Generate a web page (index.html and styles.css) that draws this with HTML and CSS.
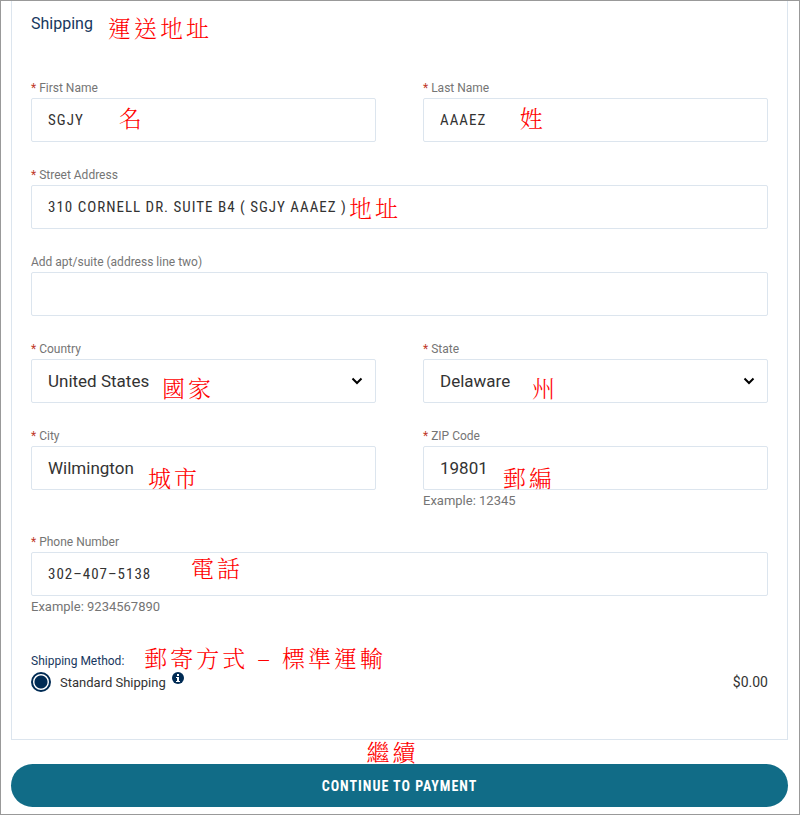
FILE: index.html
```html
<!DOCTYPE html>
<html lang="en">
<head>
  <meta charset="UTF-8" />
  <meta name="viewport" content="width=device-width, initial-scale=1" />
  <title>Checkout - Shipping</title>
  <link rel="stylesheet" href="styles.css">
</head>
<body>
  <form class="checkout">
    <section class="card">
      <div class="card-header">
        <h2>Shipping</h2>
        <span class="note" lang="zh-Hant">運送地址</span>
      </div>

      <div class="fields">
        <div class="field">
          <label for="firstName"><span class="required">*</span> First Name</label>
          <div class="control">
            <input class="caps" type="text" id="firstName" value="SGJY">
            <span class="note note-first" lang="zh-Hant">名</span>
          </div>
        </div>
        <div class="field">
          <label for="lastName"><span class="required">*</span> Last Name</label>
          <div class="control">
            <input class="caps" type="text" id="lastName" value="AAAEZ">
            <span class="note note-last" lang="zh-Hant">姓</span>
          </div>
        </div>

        <div class="field wide">
          <label for="street"><span class="required">*</span> Street Address</label>
          <div class="control">
            <input class="caps" type="text" id="street" value="310 CORNELL DR. SUITE B4 ( SGJY AAAEZ )">
            <span class="note note-street" lang="zh-Hant">地址</span>
          </div>
        </div>

        <div class="field wide">
          <label for="apt">Add apt/suite (address line two)</label>
          <div class="control">
            <input type="text" id="apt">
          </div>
        </div>

        <div class="field">
          <label for="country"><span class="required">*</span> Country</label>
          <div class="control">
            <select id="country">
              <option>United States</option>
            </select>
            <svg class="chevron" viewBox="0 0 12 8" aria-hidden="true"><path d="M1.5 1.5L6 6l4.500-4.500" /></svg>
            <span class="note note-country" lang="zh-Hant">國家</span>
          </div>
        </div>
        <div class="field">
          <label for="state"><span class="required">*</span> State</label>
          <div class="control">
            <select id="state">
              <option>Delaware</option>
            </select>
            <svg class="chevron" viewBox="0 0 12 8" aria-hidden="true"><path d="M1.5 1.5L6 6l4.500-4.500" /></svg>
            <span class="note note-state" lang="zh-Hant">州</span>
          </div>
        </div>

        <div class="field">
          <label for="city"><span class="required">*</span> City</label>
          <div class="control">
            <input type="text" id="city" value="Wilmington">
            <span class="note note-city" lang="zh-Hant">城市</span>
          </div>
        </div>
        <div class="field">
          <label for="zip"><span class="required">*</span> ZIP Code</label>
          <div class="control">
            <input type="text" id="zip" value="19801">
            <span class="note note-zip" lang="zh-Hant">郵編</span>
          </div>
          <div class="hint">Example: 12345</div>
        </div>

        <div class="field wide">
          <label for="phone"><span class="required">*</span> Phone Number</label>
          <div class="control">
            <input class="caps" type="tel" id="phone" value="302–407–5138">
            <span class="note note-phone" lang="zh-Hant">電話</span>
          </div>
          <div class="hint">Example: 9234567890</div>
        </div>
      </div>

      <div class="method">
        <div class="method-title">
          <span>Shipping Method:</span>
          <span class="note" lang="zh-Hant">郵寄方式 – 標準運輸</span>
        </div>
        <div class="method-option">
          <input type="radio" id="standard" name="method" checked>
          <label for="standard">Standard Shipping</label>
          <svg class="info" viewBox="0 0 12 12" aria-hidden="true">
            <circle cx="6" cy="6" r="6" />
            <path d="M5 2h2v2H5zM4 5h3v4h1v1H4V9h1V6H4z" />
          </svg>
          <span class="price">$0.00</span>
        </div>
      </div>
    </section>

    <div class="note continue-note" lang="zh-Hant">繼續</div>
    <button type="submit" class="continue">CONTINUE TO PAYMENT</button>
  </form>
</body>
</html>
```
FILE: styles.css
```css
* {
  box-sizing: border-box;
}
body {
  margin: 0;
  background: #fff;
  font-family: Roboto, "Noto Sans CJK TC", sans-serif;
  color: #333;
}
.checkout {
  min-height: 100vh;
  padding: 0 11px 7px 10px;
  border: 1px solid #999;
}
.card {
  padding: 11px 19px 46px;
  border: 1px solid #dce5ee;
  border-top: 0;
}
.card-header {
  display: flex;
  gap: 15px;
  margin-bottom: 34px;
}
h2 {
  margin: 0;
  font-size: 16px;
  line-height: 24px;
  font-weight: 400;
  color: #17375e;
}
.card-header .note {
  line-height: 32px;
}

/* Chinese hints next to the fields */
.note {
  font-family: "Noto Serif CJK TC", "Noto Sans CJK TC", serif;
  font-size: 23px;
  font-weight: 300;
  line-height: 23px;
  letter-spacing: 3px;
  white-space: nowrap;
  color: #f00;
}
.control .note {
  position: absolute;
  top: 8px;
  pointer-events: none;
}
.note-first {
  left: 88px;
}
.note-last {
  left: 97px;
}
.control .note-street {
  top: 11px;
  left: 318px;
}
.control .note-country,
.control .note-state {
  top: 17px;
}
.control .note-city,
.control .note-zip {
  top: 20px;
}
.note-country {
  left: 131px;
}
.note-state {
  left: 109px;
}
.note-city {
  left: 117px;
}
.note-zip {
  left: 80px;
}
.control .note-phone {
  top: 4px;
  left: 160px;
}

.fields {
  display: grid;
  grid-template-columns: 1fr 1fr;
  gap: 23px 47px;
}
.wide {
  grid-column: 1 / -1;
}
.field label {
  display: block;
  font-size: 12px;
  line-height: 20px;
  color: #757575;
}
.required {
  color: #c0392b;
}
.control {
  position: relative;
}
.control input,
.control select {
  display: block;
  width: 100%;
  height: 44px;
  padding: 0 16px;
  border: 1px solid #dce5ee;
  border-radius: 2px;
  background: #fff;
  font-family: inherit;
  font-size: 17px;
  color: #333;
  appearance: none;
}
.control .caps {
  font-family: "Roboto Condensed", Roboto, sans-serif;
  font-size: 15px;
  letter-spacing: 1px;
}
.chevron {
  position: absolute;
  top: 18px;
  right: 13px;
  width: 12px;
  height: 8px;
  fill: none;
  stroke: #000;
  stroke-width: 2;
}
.hint {
  margin-top: 3px;
  font-size: 13px;
  line-height: 16px;
  color: #757575;
}

.method {
  margin-top: 31px;
}
.method-title {
  display: flex;
  align-items: flex-end;
  gap: 20px;
  margin-bottom: 1px;
  font-size: 12px;
  line-height: 16px;
  color: #17375e;
}
.method-option {
  display: flex;
  align-items: center;
  font-size: 13px;
  line-height: 20px;
}
.method-option input {
  width: 20px;
  height: 20px;
  margin: 0 9px 0 0;
  border: 2px solid #002b54;
  border-radius: 50%;
  background: radial-gradient(circle, #002b54 6px, #fff 7px);
  appearance: none;
}
.method-option label {
  padding-top: 3px;
}
.info {
  align-self: flex-start;
  width: 12px;
  height: 12px;
  margin: 2px 0 0 6px;
  fill: #002b54;
}
.info path {
  fill: #fff;
}
.price {
  margin-left: auto;
  font-size: 14px;
}

.continue-note {
  padding: 0 14px 1px 0;
  text-align: center;
}
.continue {
  display: block;
  width: 100%;
  height: 43px;
  border: 0;
  border-radius: 22px;
  background: #116c87;
  font-family: "Roboto Condensed", Roboto, sans-serif;
  font-size: 14px;
  font-weight: 700;
  letter-spacing: 1px;
  color: #fff;
  cursor: pointer;
}
```
